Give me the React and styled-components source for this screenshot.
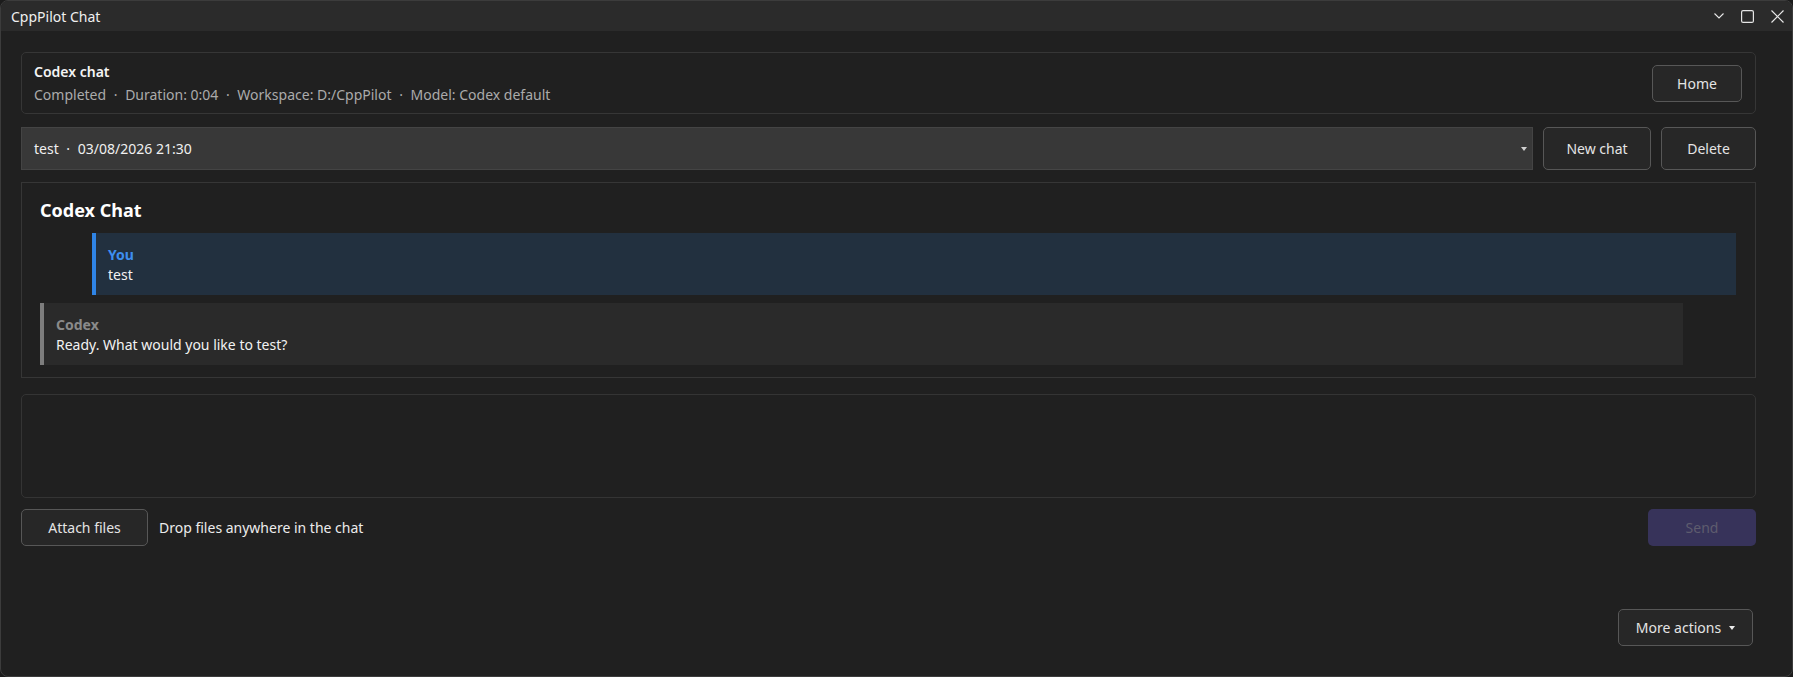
import styled, { createGlobalStyle } from "styled-components";

const GlobalStyle = createGlobalStyle`
  html, body {
    margin: 0;
    padding: 0;
    background: #1c1c1c;
  }
  * { box-sizing: border-box; }
`;

const font = `"Noto Sans", "Open Sans", sans-serif`;

export default function App() {
  return (
    <>
      <GlobalStyle />
      <Window>
        <TitleBar>
          <Title>CppPilot Chat</Title>
          <Controls>
            <svg width="10" height="6" viewBox="0 0 10 6">
              <path d="M0.5 0.5 L5 5 L9.5 0.5" stroke="#e6e6e6" strokeWidth="1.1" fill="none" />
            </svg>
            <svg width="13" height="13" viewBox="0 0 13 13">
              <rect x="0.6" y="0.6" width="11.8" height="11.8" rx="1.5" stroke="#e6e6e6" strokeWidth="1.2" fill="none" />
            </svg>
            <svg width="13" height="13" viewBox="0 0 13 13">
              <path d="M0.5 0.5 L12.5 12.5 M12.5 0.5 L0.5 12.5" stroke="#e6e6e6" strokeWidth="1.2" />
            </svg>
          </Controls>
        </TitleBar>

        <Content>
          <HeaderCard>
            <div>
              <CardTitle>Codex chat</CardTitle>
              <Meta>
                Completed <Dot>·</Dot> Duration: 0:04 <Dot>·</Dot> Workspace: D:/CppPilot <Dot>·</Dot> Model: Codex default
              </Meta>
            </div>
            <Button $w={90}>Home</Button>
          </HeaderCard>

          <SessionRow>
            <Combo>
              <span>test <Dot>·</Dot> 03/08/2026 21:30</span>
              <Caret />
            </Combo>
            <Button $w={108} $h={43}>New chat</Button>
            <Button $w={95} $h={43}>Delete</Button>
          </SessionRow>

          <ChatPanel>
            <ChatHeading>Codex Chat</ChatHeading>
            <Bubble $user>
              <Author $user>You</Author>
              <Body>test</Body>
            </Bubble>
            <Bubble>
              <Author>Codex</Author>
              <Body>Ready. What would you like to test?</Body>
            </Bubble>
          </ChatPanel>

          <Composer />

          <ActionRow>
            <Button $w={127}>Attach files</Button>
            <Hint>Drop files anywhere in the chat</Hint>
            <SendButton>Send</SendButton>
          </ActionRow>

          <Footer>
            <Button $w={135}>
              More actions <Caret $light />
            </Button>
          </Footer>
        </Content>
      </Window>
    </>
  );
}

const Window = styled.div`
  width: 1793px;
  height: 677px;
  background: #202020;
  border: 1px solid #3c3c3c;
  border-radius: 8px;
  overflow: hidden;
  display: flex;
  flex-direction: column;
  font-family: ${font};
  color: #e8e8e8;
`;

const TitleBar = styled.div`
  height: 30px;
  flex-shrink: 0;
  background: #2b2b2b;
  display: flex;
  align-items: center;
  justify-content: space-between;
  padding: 0 8px 0 10px;
`;

const Title = styled.div`
  font-size: 14px;
  color: #f0f0f0;
`;

const Controls = styled.div`
  display: flex;
  align-items: center;
  gap: 17px;
`;

const Content = styled.div`
  flex: 1;
  display: flex;
  flex-direction: column;
  padding: 21px 36px 0 20px;
`;

const HeaderCard = styled.div`
  height: 62px;
  border: 1px solid #363636;
  border-radius: 5px;
  display: flex;
  align-items: center;
  justify-content: space-between;
  padding: 0 13px 0 12px;
`;

const CardTitle = styled.div`
  font-size: 14px;
  font-weight: 600;
  color: #f4f4f4;
  line-height: 23px;
`;

const Meta = styled.div`
  font-size: 14px;
  color: #ababab;
  line-height: 23px;
`;

const Dot = styled.span`
  margin: 0 4px;
`;

const Button = styled.button`
  width: ${(p) => p.$w}px;
  height: ${(p) => p.$h || 37}px;
  flex-shrink: 0;
  background: #272727;
  border: 1px solid #575757;
  border-radius: 5px;
  color: #e4e4e4;
  font-family: ${font};
  font-size: 14px;
  display: flex;
  align-items: center;
  justify-content: center;
  gap: 8px;
  padding: 0;
`;

const SessionRow = styled.div`
  margin-top: 13px;
  display: flex;
  gap: 10px;
`;

const Combo = styled.div`
  flex: 1;
  height: 43px;
  background: #383838;
  border: 1px solid #444;
  display: flex;
  align-items: center;
  justify-content: space-between;
  padding: 0 5px 0 12px;
  font-size: 14px;
  color: #f0f0f0;
`;

const Caret = styled.span`
  width: 0;
  height: 0;
  border-left: 3px solid transparent;
  border-right: 3px solid transparent;
  border-top: 4px solid ${(p) => (p.$light ? "#ececec" : "#d0d0d0")};
`;

const ChatPanel = styled.div`
  margin-top: 12px;
  height: 196px;
  border: 1px solid #363636;
  padding: 14px 19px 0 18px;
  display: flex;
  flex-direction: column;
  gap: 8px;
`;

const ChatHeading = styled.div`
  font-size: 18px;
  font-weight: 700;
  color: #ffffff;
  line-height: 26px;
  margin-bottom: 2px;
`;

const Bubble = styled.div`
  background: ${(p) => (p.$user ? "#22303f" : "#2a2a2a")};
  border-left: 4px solid ${(p) => (p.$user ? "#2f84e6" : "#7d7d7d")};
  margin-left: ${(p) => (p.$user ? "52px" : "0")};
  margin-right: ${(p) => (p.$user ? "0" : "53px")};
  padding: 12px 12px 10px 12px;
  height: 62px;
`;

const Author = styled.div`
  font-size: 14px;
  font-weight: 700;
  line-height: 20px;
  color: ${(p) => (p.$user ? "#3d8ef0" : "#8a8a8a")};
`;

const Body = styled.div`
  font-size: 14px;
  line-height: 20px;
  color: #f2f2f2;
`;

const Composer = styled.div`
  margin-top: 16px;
  height: 104px;
  border: 1px solid #343434;
  border-radius: 5px;
`;

const ActionRow = styled.div`
  margin-top: 11px;
  display: flex;
  align-items: center;
`;

const Hint = styled.div`
  flex: 1;
  margin-left: 11px;
  font-size: 14px;
  color: #ececec;
`;

const SendButton = styled.button`
  width: 108px;
  height: 37px;
  background: #37335a;
  border: none;
  border-radius: 5px;
  color: #5e5c6e;
  font-family: ${font};
  font-size: 14px;
`;

const Footer = styled.div`
  margin-top: 63px;
  display: flex;
  justify-content: flex-end;
  padding-right: 3px;
`;
